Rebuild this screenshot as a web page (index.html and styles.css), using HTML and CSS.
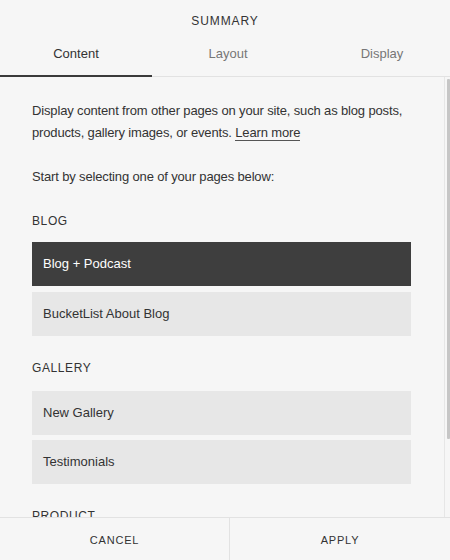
FILE: index.html
```html
<!DOCTYPE html>
<html>
<head>
<meta charset="utf-8">
<link rel="stylesheet" href="styles.css">
</head>
<body>
<div class="panel">
  <header class="head">
    <div class="title">SUMMARY</div>
    <nav class="tabs">
      <div class="tab active">Content</div>
      <div class="tab">Layout</div>
      <div class="tab last">Display</div>
    </nav>
  </header>
  <div class="body">
    <div class="pane">
      <p class="intro">Display content from other pages on your site, such as blog posts, products, gallery images, or events. <span class="link">Learn more</span></p>
      <p class="start">Start by selecting one of your pages below:</p>
      <div class="group">
        <div class="label">BLOG</div>
        <div class="list">
          <div class="item selected">Blog + Podcast</div>
          <div class="item">BucketList About Blog</div>
        </div>
      </div>
      <div class="group">
        <div class="label">GALLERY</div>
        <div class="list">
          <div class="item">New Gallery</div>
          <div class="item">Testimonials</div>
        </div>
      </div>
      <div class="group">
        <div class="label">PRODUCT</div>
      </div>
    </div>
    <div class="track"><div class="thumb"></div></div>
  </div>
  <footer class="foot">
    <div class="btn">CANCEL</div>
    <div class="btn">APPLY</div>
  </footer>
</div>
</body>
</html>
```

FILE: styles.css
```css
* { box-sizing: border-box; }
html, body {
  margin: 0;
  padding: 0;
  width: 450px;
  height: 560px;
  overflow: hidden;
  background: #f6f6f6;
  font-family: "Liberation Sans", Arial, sans-serif;
  color: #333;
}
.panel {
  display: flex;
  flex-direction: column;
  height: 560px;
}
.head {
  flex: none;
  border-bottom: 1px solid #e2e2e2;
}
.title {
  height: 38px;
  line-height: 42px;
  text-align: center;
  font-size: 12px;
  letter-spacing: 0.9px;
  color: #333;
}
.tabs {
  display: grid;
  grid-template-columns: 152px 152px 1fr;
}
.tab {
  text-align: center;
  font-size: 13px;
  line-height: 18px;
  padding: 7px 0 13px;
  color: #777;
  margin-bottom: -1px;
  border-bottom: 1px solid transparent;
}
.tab.last { padding-left: 10px; }
.tab.active {
  color: #333;
  border-bottom: 2px solid #3a3a3a;
  padding-bottom: 12px;
}
.body {
  flex: 1;
  display: flex;
  overflow: hidden;
  min-height: 0;
}
.pane {
  flex: 1;
  padding: 23px 33px 0 32px;
  overflow: hidden;
}
.intro, .start {
  margin: 0;
  font-size: 13px;
  line-height: 22px;
  letter-spacing: -0.15px;
  color: #333;
}
.start { margin-top: 22px; }
.link {
  border-bottom: 1px solid #555;
}
.group { margin-top: 24px; }
.group + .group { margin-top: 23px; }
.label {
  font-size: 12px;
  line-height: 18px;
  letter-spacing: 0.6px;
  color: #333;
}
.list {
  margin-top: 12px;
  display: flex;
  flex-direction: column;
  gap: 6px;
}
.group + .group .list { margin-top: 14px; gap: 5px; }
.item {
  height: 44px;
  line-height: 44px;
  padding-left: 11px;
  font-size: 13px;
  background: #e7e7e7;
  color: #333;
}
.item.selected {
  background: #3e3e3e;
  color: #fff;
}
.track {
  flex: none;
  width: 6px;
  border-left: 1px solid #e6e6e6;
  padding: 2px 0 0 2px;
}
.thumb {
  width: 3px;
  height: 360px;
  background: #c6c6c6;
  border-radius: 1px;
}
.foot {
  flex: none;
  height: 43px;
  display: grid;
  grid-template-columns: 229px 1fr;
  border-top: 1px solid #e2e2e2;
  background: #f6f6f6;
}
.btn {
  display: flex;
  align-items: center;
  justify-content: center;
  padding-top: 1px;
  font-size: 11px;
  letter-spacing: 0.8px;
  color: #333;
}
.btn + .btn { border-left: 1px solid #e2e2e2; }
```
